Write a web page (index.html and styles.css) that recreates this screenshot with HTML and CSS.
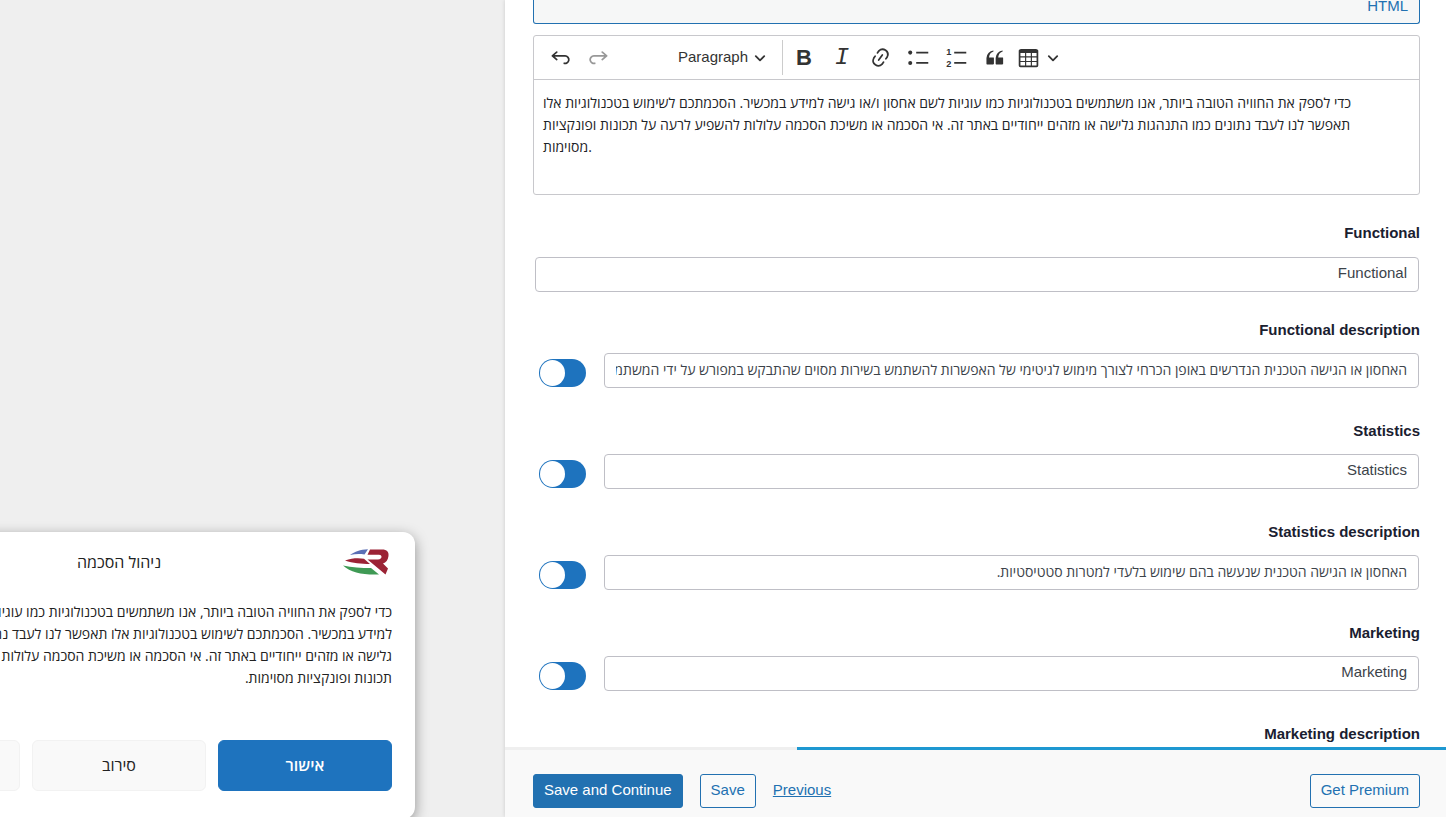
FILE: index.html
```html
<!DOCTYPE html>
<html lang="en">
<head>
  <meta charset="UTF-8">
  <meta name="viewport" content="width=device-width, initial-scale=1.0">
  <title>Cookie Banner Settings</title>
  <link rel="stylesheet" href="styles.css">
</head>
<body>
  <section class="preview">
    <div class="banner" dir="rtl" lang="he">
      <div class="banner-header">
        <svg class="banner-logo" viewBox="0 0 46 26" aria-hidden="true">
          <path fill="#5b6fb5" d="M7 6C12 2.500 17 .8 25 .3L21.500 5.400C16 4.800 12 5 7 6z"/>
          <path fill="#9b2335" d="M2 11.500C9 9 16 9 21 9.800L27 15C18 14.800 10 14.500 2 11.500z"/>
          <path fill="#3f9a55" d="M0 16.500C9 18.500 18 19 28 19L36 25.500C20 26 8 24 0 16.500z"/>
          <path fill="#9b2335" d="M27 .5h12C44 .5 46 3 45.500 7 45 11 43 13.500 40 14.500L45 19.500 42.500 25.500 24.500 10.500H35C37.500 10.500 38.500 9 38.500 7.800 38.500 6.500 37.500 5.800 36 5.800H24.500z"/>
        </svg>
        <div class="banner-title">ניהול הסכמה</div>
      </div>
      <p class="banner-text">כדי לספק את החוויה הטובה ביותר, אנו משתמשים בטכנולוגיות כמו עוגיות לשם אחסון ו/או גישה למידע במכשיר. הסכמתכם לשימוש בטכנולוגיות אלו תאפשר לנו לעבד נתונים כמו התנהגות גלישה או מזהים ייחודיים באתר זה. אי הסכמה או משיכת הסכמה עלולות להשפיע לרעה על תכונות ופונקציות מסוימות.</p>
      <div class="banner-buttons">
        <button type="button" class="accept">אישור</button>
        <button type="button">סירוב</button>
        <button type="button" aria-label="העדפות"></button>
      </div>
    </div>
  </section>

  <main class="panel">
    <form class="fields">
      <button type="button" class="html-tab">HTML</button>

      <div class="editor">
        <div class="toolbar">
          <button type="button" class="tool" aria-label="Undo">
            <svg viewBox="0 0 20 20"><path d="m5.042 9.367 2.189 1.837a.75.75 0 0 1-.965 1.149l-3.788-3.18a.747.747 0 0 1-.21-.284.75.75 0 0 1 .17-.945L6.23 4.762a.75.75 0 1 1 .964 1.15L4.863 7.866h8.917A.75.75 0 0 1 14 7.900a4 4 0 1 1-1.477 7.718l.344-1.489a2.500 2.500 0 1 0 1.094-4.730l.008-.032H5.042z"/></svg>
          </button>
          <button type="button" class="tool" aria-label="Redo" disabled>
            <svg viewBox="0 0 20 20"><path d="m14.958 9.367-2.189 1.837a.75.75 0 0 0 .965 1.149l3.788-3.180a.747.747 0 0 0 .21-.284.75.75 0 0 0-.17-.945L13.770 4.762a.75.75 0 1 0-.964 1.150l2.331 1.955H6.220A.75.75 0 0 0 6 7.900a4 4 0 1 0 1.477 7.718l-.344-1.489A2.500 2.500 0 1 1 6.039 9.400l-.008-.032h8.927z"/></svg>
          </button>
          <div class="heading-select">
            <select aria-label="Heading">
              <option>Paragraph</option>
            </select>
            <svg class="chevron" viewBox="0 0 10 10"><path d="M1.500 3.500 5 7l3.500-3.500"/></svg>
          </div>
          <span class="separator"></span>
          <button type="button" class="tool bold" aria-label="Bold">B</button>
          <button type="button" class="tool italic" aria-label="Italic">I</button>
          <button type="button" class="tool" aria-label="Link">
            <svg viewBox="0 0 20 20"><path d="m11.077 15 .991-1.416a.75.75 0 1 1 1.229.86l-1.148 1.640a.748.748 0 0 1-.217.206 5.251 5.251 0 0 1-8.503-5.955.741.741 0 0 1 .12-.274l1.147-1.639a.75.75 0 1 1 1.228.86L4.933 10.700l.006.003a3.750 3.750 0 0 0 6.132 4.294l.006.004zm5.494-5.335a.748.748 0 0 1-.12.274l-1.147 1.639a.75.75 0 1 1-1.228-.86l.86-1.230a3.750 3.750 0 0 0-6.144-4.301l-.86 1.229a.75.75 0 0 1-1.229-.86l1.148-1.640a.748.748 0 0 1 .217-.206 5.251 5.251 0 0 1 8.503 5.955zm-4.563-2.532a.75.75 0 0 1 .184 1.045l-3.155 4.505a.75.75 0 1 1-1.229-.86l3.155-4.506a.75.75 0 0 1 1.045-.184z"/></svg>
          </button>
          <button type="button" class="tool" aria-label="Bulleted list">
            <svg viewBox="0 0 20 20"><path d="M8 5h10.500v1.500H8zM8 14h10.500v1.500H8z"/><circle cx="2.800" cy="5.750" r="1.750"/><circle cx="2.800" cy="14.750" r="1.750"/></svg>
          </button>
          <button type="button" class="tool" aria-label="Numbered list">
            <svg viewBox="0 0 20 20"><path d="M8 5h10.500v1.500H8zM8 14h10.500v1.500H8z"/><text x="1" y="8">1</text><text x="1" y="18">2</text></svg>
          </button>
          <button type="button" class="tool" aria-label="Block quote">
            <svg viewBox="0 0 20 20"><path d="M3 10.423a6.500 6.500 0 0 1 6.056-6.408l.038.67C6.448 5.423 5.354 7.663 5.220 10H9c.552 0 .5.432.5.986v4.511c0 .554-.448.503-1 .503h-5c-.552 0-.5-.449-.5-1.003v-4.574zm8 0a6.500 6.500 0 0 1 6.056-6.408l.038.67c-2.646.739-3.740 2.979-3.873 5.315H17c.552 0 .5.432.5.986v4.511c0 .554-.448.503-1 .503h-5c-.552 0-.5-.449-.5-1.003v-4.574z"/></svg>
          </button>
          <button type="button" class="tool table-tool" aria-label="Insert table">
            <svg viewBox="0 0 20 20"><path d="M3 6v3h4V6H3zm0 4v3h4v-3H3zm0 4v3h4v-3H3zm5 3h4v-3H8v3zm5 0h4v-3h-4v3zm4-4v-3h-4v3h4zm0-4V6h-4v3h4zm1.500 8a1.500 1.500 0 0 1-1.500 1.500H3A1.500 1.500 0 0 1 1.500 17V4c.222-.863 1.068-1.500 2-1.500h13c.932 0 1.778.637 2 1.500v13zM12 13v-3H8v3h4zm0-4V6H8v3h4z"/></svg>
            <svg class="chevron" viewBox="0 0 10 10"><path d="M1.500 3.500 5 7l3.500-3.500"/></svg>
          </button>
        </div>
        <div class="editor-content" contenteditable="true" role="textbox" aria-label="Consent message" lang="he" spellcheck="false">
          <p>כדי לספק את החוויה הטובה ביותר, אנו משתמשים בטכנולוגיות כמו עוגיות לשם אחסון ו/או גישה למידע במכשיר. הסכמתכם לשימוש בטכנולוגיות אלו תאפשר לנו לעבד נתונים כמו התנהגות גלישה או מזהים ייחודיים באתר זה. אי הסכמה או משיכת הסכמה עלולות להשפיע לרעה על תכונות ופונקציות מסוימות.</p>
        </div>
      </div>

      <div class="field">
        <label for="functional">Functional</label>
        <input type="text" id="functional" dir="rtl" value="Functional">
      </div>

      <div class="field">
        <label for="functional-text">Functional description</label>
        <div class="field-row">
          <input type="checkbox" class="toggle" aria-label="Show functional description">
          <input type="text" id="functional-text" class="hebrew" dir="rtl" value="האחסון או הגישה הטכנית הנדרשים באופן הכרחי לצורך מימוש לגיטימי של האפשרות להשתמש בשירות מסוים שהתבקש במפורש על ידי המשתמש">
        </div>
      </div>

      <div class="field">
        <label for="statistics">Statistics</label>
        <div class="field-row">
          <input type="checkbox" class="toggle" aria-label="Show statistics">
          <input type="text" id="statistics" dir="rtl" value="Statistics">
        </div>
      </div>

      <div class="field">
        <label for="statistics-text">Statistics description</label>
        <div class="field-row">
          <input type="checkbox" class="toggle" aria-label="Show statistics description">
          <input type="text" id="statistics-text" class="hebrew" dir="rtl" value="האחסון או הגישה הטכנית שנעשה בהם שימוש בלעדי למטרות סטטיסטיות.">
        </div>
      </div>

      <div class="field">
        <label for="marketing">Marketing</label>
        <div class="field-row">
          <input type="checkbox" class="toggle" aria-label="Show marketing">
          <input type="text" id="marketing" dir="rtl" value="Marketing">
        </div>
      </div>

      <div class="field">
        <span class="label">Marketing description</span>
      </div>
    </form>

    <div class="progress"><div class="progress-bar"></div></div>

    <footer class="actions">
      <button type="button" class="btn primary">Save and Continue</button>
      <button type="button" class="btn">Save</button>
      <a href="#">Previous</a>
      <button type="button" class="btn premium">Get Premium</button>
    </footer>
  </main>
</body>
</html>
```

FILE: styles.css
```css
* {
  box-sizing: border-box;
}

body {
  margin: 0;
  display: flex;
  height: 100vh;
  overflow: hidden;
  background-color: #efefef;
  color: #1d2327;
  font-family: "Liberation Sans", Arial, sans-serif;
  font-size: 15px;
}

button, input, select {
  font: inherit;
  color: inherit;
}

button {
  cursor: pointer;
}

/* banner preview */
.preview {
  flex: 505 1 0;
  min-width: 0;
  display: flex;
  flex-direction: column;
  justify-content: flex-end;
  align-items: flex-end;
  overflow: hidden;
}

.banner {
  flex-shrink: 0;
  width: 592px;
  margin: 0 90px -2px 0;
  padding: 15px 23px 28px;
  border-radius: 12px;
  background-color: #fff;
  box-shadow: 0 4px 14px rgba(0, 0, 0, 0.4);
  font-family: "Open Sans", "Noto Sans", sans-serif;
  font-size: 14px;
  color: #222;
}

.banner-header {
  display: grid;
  grid-template-columns: 1fr auto 1fr;
  align-items: center;
  height: 30px;
}

.banner-logo {
  width: 46px;
  height: 26px;
  margin-right: 3px;
}

.banner-title {
  font-size: 16px;
}

.banner-text {
  margin: 24px 0 51px;
  padding-left: 14px;
  line-height: 22px;
}

.banner-buttons {
  display: grid;
  grid-template-columns: repeat(3, 1fr);
  gap: 12px;
}

.banner-buttons button {
  height: 51px;
  padding-bottom: 3px;
  border: 1px solid #f2f2f2;
  border-radius: 6px;
  background-color: #f9f9f9;
  font-size: 16px;
}

.banner-buttons .accept {
  border-color: #1e73be;
  background-color: #1e73be;
  color: #fff;
  font-weight: 600;
}

/* settings */
.panel {
  flex: 941 1 0;
  min-width: 0;
  display: flex;
  flex-direction: column;
  background-color: #fff;
  box-shadow: 0 0 4px rgba(0, 0, 0, 0.15);
}

.fields {
  flex: 1;
  min-height: 0;
  overflow: hidden;
  padding: 0 26px 0 28px;
}

.html-tab {
  display: block;
  width: 100%;
  height: 24px;
  padding: 0 11px 11px;
  border: 1px solid #2271b1;
  border-top: none;
  border-radius: 0 0 3px 3px;
  background-color: #f6f7f7;
  color: #2271b1;
  line-height: 12px;
  text-align: right;
}

.editor {
  margin: 11px 0 27px;
  border: 1px solid #c8c8cc;
  border-radius: 3px;
}

.toolbar {
  display: flex;
  align-items: center;
  height: 44px;
  padding-left: 7px;
  border-bottom: 1px solid #c8c8cc;
  color: #333;
}

.tool {
  display: flex;
  align-items: center;
  justify-content: center;
  width: 38px;
  height: 38px;
  padding: 0;
  border: none;
  background: none;
}

.tool:disabled {
  opacity: 0.5;
}

.tool svg {
  flex: none;
  width: 23px;
  height: 23px;
  fill: currentColor;
}

.tool text {
  font-size: 8px;
  font-weight: bold;
}

.bold {
  font-size: 22px;
  font-weight: bold;
}

.italic {
  font-family: "Liberation Mono", monospace;
  font-size: 24px;
  font-style: italic;
}

.table-tool {
  justify-content: flex-start;
  gap: 7px;
  width: 54px;
  padding-left: 4px;
}

svg.chevron, .tool svg.chevron {
  width: 12px;
  height: 12px;
  fill: none;
  stroke: currentColor;
  stroke-width: 1.5;
  stroke-linecap: round;
  stroke-linejoin: round;
}

.heading-select {
  display: flex;
  align-items: center;
  gap: 5px;
  margin: 0 16px 0 61px;
}

.heading-select select {
  padding: 0 0 2px;
  border: none;
  background: none;
  appearance: none;
}

.separator {
  width: 1px;
  height: 35px;
  margin-right: 2px;
  background-color: #ccc;
}

.editor-content {
  height: 114px;
  padding: 12px 30px 12px 9px;
  font-family: "Open Sans", "Noto Sans", sans-serif;
  font-size: 14px;
  line-height: 22px;
}

.editor-content p {
  margin: 0;
}

.field {
  margin-bottom: 27px;
}

.field label, .field .label {
  display: block;
  margin-bottom: 12px;
  color: #1a2030;
  font-weight: bold;
  line-height: 22px;
  text-align: right;
}

.field input[type="text"] {
  display: block;
  width: 100%;
  height: 35px;
  padding: 0 11px 4px;
  border: 1px solid #bfbfc6;
  border-radius: 4px;
  background-color: #fff;
  color: #3c434a;
}

.field > input[type="text"] {
  width: calc(100% - 3px);
  margin: 13px 0 0 2px;
}

.field input.hebrew {
  padding-bottom: 2px;
  font-family: "Open Sans", "Noto Sans", sans-serif;
  font-size: 14px;
}

.field-row {
  display: flex;
  gap: 18px;
  height: 40px;
  padding: 0 1px 0 6px;
}

.toggle {
  flex: none;
  appearance: none;
  width: 47px;
  height: 28px;
  margin: 6px 0 0;
  border-radius: 14px;
  background-color: #1e73be;
  cursor: pointer;
}

.toggle::before {
  content: "";
  display: block;
  width: 25px;
  height: 26px;
  margin: 1px;
  border-radius: 50%;
  background-color: #fff;
}

.progress {
  display: flex;
  justify-content: flex-end;
  height: 3px;
  background-color: #efefef;
}

.progress-bar {
  width: 69%;
  background-color: #1e98d1;
}

.actions {
  display: flex;
  align-items: center;
  gap: 17px;
  height: 67px;
  padding: 14px 26px 0 28px;
  background-color: #f9f9f9;
}

.actions a {
  padding-bottom: 2px;
  color: #2271b1;
}

.btn {
  height: 34px;
  padding: 0 10px 2px;
  border: 1px solid #2271b1;
  border-radius: 3px;
  background-color: #f9fafa;
  color: #2271b1;
}

.primary {
  background-color: #2271b1;
  color: #fff;
}

.premium {
  margin-left: auto;
}
```
